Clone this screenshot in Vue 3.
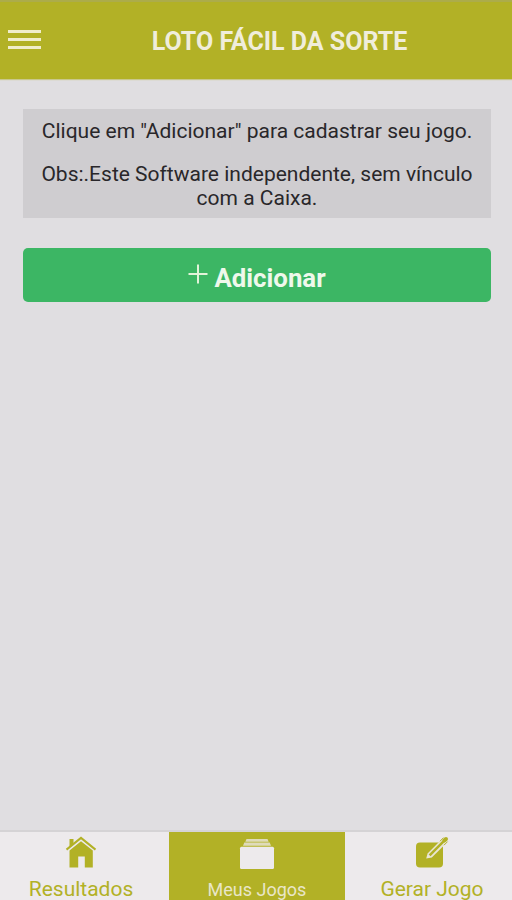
<script setup>
import { ref } from 'vue';

const active = ref('jogos');

const tabs = [
  { id: 'resultados', label: 'Resultados' },
  { id: 'jogos', label: 'Meus Jogos' },
  { id: 'gerar', label: 'Gerar Jogo' },
]
</script>

<template>
  <div class="app">
    <header class="header">
      <button class="menu" aria-label="Menu">
        <span></span>
        <span></span>
        <span></span>
      </button>
      <h1>LOTO FÁCIL DA SORTE</h1>
    </header>

    <main class="content">
      <div class="notice">
        <p class="hint">Clique em "Adicionar" para cadastrar seu jogo.</p>
        <p class="obs">Obs:.Este Software independente, sem vínculo<br>com a Caixa.</p>
      </div>
      <button class="add">
        <svg width="20" height="20" viewBox="0 0 20 20">
          <path d="M10 .5v19M.5 10h19" stroke="#e2f3d9" stroke-width="2" />
        </svg>
        <span>Adicionar</span>
      </button>
    </main>

    <nav class="tabs">
      <button
        v-for="tab in tabs" :key="tab.id"
        class="tab" :class="[tab.id, { active: active === tab.id }]"
        @click="active = tab.id"
      >
        <svg v-if="tab.id === 'resultados'" class="icon" width="36" height="34" viewBox="0 0 36 34">
          <path d="M6.5 3h4v5.2l-4 3.4z" fill="currentColor" />
          <path d="M3.5 13.6 18 1.9l14.5 11.7" fill="none" stroke="currentColor" stroke-width="2" />
          <path d="M18 5.2 29.8 14.4v17h-8V20.5h-6.6v10.9H6.5V14.4z" fill="currentColor" />
        </svg>
        <svg v-else-if="tab.id === 'jogos'" class="icon" width="36" height="34" viewBox="0 0 36 34">
          <path d="M7.5 3h21l1.2 2.8H6.3zM5.3 6.5h25.4L32 9.8H4z" fill="currentColor" opacity=".75" />
          <rect x="1" y="10.7" width="34" height="22.3" rx="1.5" fill="currentColor" />
        </svg>
        <svg v-else class="icon" width="36" height="34" viewBox="0 0 36 34">
          <rect x="2" y="6.5" width="27" height="25" rx="4" fill="currentColor" />
          <path d="M25.5 4.5h5v8z" fill="#edeaec" />
          <path d="m12.2 22.6 1.4-5.2L27.5 3.5l4.2 4.2-13.9 13.9z" fill="#e9e6d6" />
          <path d="M15.6 19.4 29.3 5.7" stroke="currentColor" stroke-width="2.5" />
          <path d="M26 5.2 29.6 1.6M30 9.2l3.6-3.6" stroke="currentColor" stroke-width="1" />
          <path d="M30.3 4.7 32 3" stroke="currentColor" stroke-width="4" stroke-linecap="round" />
        </svg>
        <span class="label">{{ tab.label }}</span>
      </button>
    </nav>
  </div>
</template>

<style>
body {
  margin: 0;
  overflow: hidden;
}
</style>

<style scoped>
.app {
  display: flex;
  flex-direction: column;
  height: 900px;
  overflow: hidden;
  background: #e0dee1;
  font-family: Roboto, "Liberation Sans", sans-serif;
}

button {
  margin: 0;
  padding: 0;
  border: 0;
  font-family: inherit;
  cursor: pointer;
}

.header {
  display: grid;
  grid-template-columns: 48px 1fr;
  align-items: center;
  flex: none;
  box-sizing: border-box;
  height: 79px;
  border-top: 2px solid #acac4a;
  background: #b2b126;
  box-shadow: 0 1px 1px #c9c88c;
}

.menu {
  display: flex;
  flex-direction: column;
  gap: 5px;
  width: 33px;
  margin: 0 0 3px 8.4px;
  background: none;
}

.menu span {
  height: 3px;
  background: #f0edcb;
}

h1 {
  margin: 3px 0 0;
  padding-right: 1px;
  color: #f0eddb;
  font-size: 25px;
  line-height: 30px;
  font-weight: 700;
  text-align: center;
  white-space: nowrap;
}

.content {
  flex: 1;
  padding: 30px 21px 0 23px;
}

.notice {
  box-sizing: border-box;
  height: 109px;
  padding-top: 10px;
  background: #cfcdd0;
  color: #29272a;
  font-size: 21px;
  line-height: 25px;
  text-align: center;
  white-space: nowrap;
}

.notice p {
  margin: 0;
}

.notice .obs {
  margin-top: 18px;
  line-height: 24px;
}

.add {
  display: flex;
  justify-content: center;
  gap: 6px;
  width: 100%;
  height: 54px;
  margin-top: 29.5px;
  border-radius: 5px;
  background: #3cb664;
  color: #eff8eb;
  font-size: 25.8px;
  line-height: 61px;
  font-weight: 700;
}

.add svg {
  margin-top: 16px;
}

.tabs {
  display: grid;
  grid-template-columns: 169px 176px 167px;
  flex: none;
  height: 68px;
  border-top: 2px solid #d5d3d5;
}

.tab {
  display: flex;
  flex-direction: column;
  align-items: center;
  background: #edeaec;
  color: #b2b126;
  font-size: 21px;
}

.tab.resultados {
  padding-right: 7px;
}

.tab.gerar {
  padding-left: 7px;
}

.tab.active {
  background: #b2b126;
  color: #edeaec;
  font-size: 18px;
}

.icon {
  flex: none;
  margin-top: 4px;
}

.label {
  margin-top: 7px;
  line-height: 25px;
  white-space: nowrap;
}

.active .label {
  color: #e9e6c8;
}
</style>
